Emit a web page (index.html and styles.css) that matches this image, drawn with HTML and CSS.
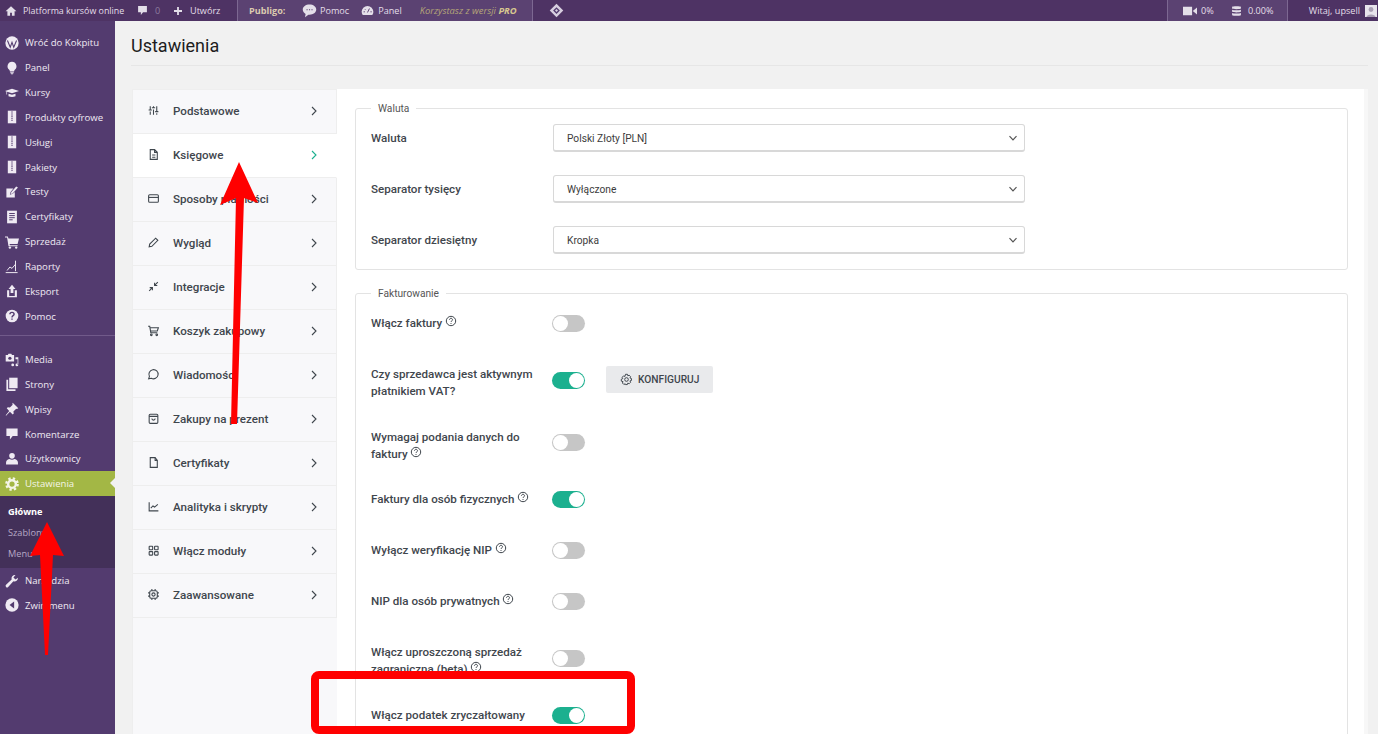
FILE: index.html
```html
<!DOCTYPE html>
<html>
<head>
    <title>Ustawienia</title>
    <link rel="stylesheet" href="styles.css">
</head>
<body>
    <svg class="sprites" width="0" height="0">
        <symbol id="chev" viewBox="0 0 10 10"><path d="M3 1l4 4-4 4" fill="none" stroke="currentColor" stroke-width="1.1"/></symbol>
        <symbol id="down" viewBox="0 0 10 10"><path d="M1.5 3.2L5 6.8l3.5-3.6" fill="none" stroke="currentColor" stroke-width="1.2"/></symbol>
        <symbol id="help" viewBox="0 0 12 12"><circle cx="6" cy="6" r="4.7" fill="none" stroke="currentColor"/><path d="M4.5 4.8c0-2 3-2 3 0 0 1.1-1.5 1.1-1.5 2.2M6 8v.9" fill="none" stroke="currentColor"/></symbol>
        <symbol id="zip" viewBox="0 0 20 20"><path d="M4 1h12v18H4z" fill="currentColor"/><path d="M10 2v14" stroke="#533b6f" stroke-width="2" stroke-dasharray="1.5 1.5"/></symbol>
    </svg>

    <div class="topbar">
        <div class="top-group top-site">
            <svg class="ti" viewBox="0 0 20 20"><path d="M10 2L1 10.500h3V18h4.500v-5h3v5H16v-7.500h3z"/></svg>
            <span class="site-name">Platforma kursów online</span>
            <svg class="ti ti-comment" viewBox="0 0 20 20"><path d="M2 2h16v11h-7l-4 5v-5H2z"/></svg>
            <span class="dim">0</span>
            <svg class="ti ti-plus" viewBox="0 0 20 20"><path d="M8.200 2h3.600v6.200H18v3.600h-6.200V18H8.200v-6.200H2V8.200h6.200z"/></svg>
            <span>Utwórz</span>
        </div>
        <div class="top-group top-publigo">
            <strong class="tan">Publigo:</strong>
            <svg class="ti ti-bubble" viewBox="0 0 20 20"><path d="M10 2c5 0 9 2.800 9 6.800s-4 6.700-9 6.700H8.500L4 19l.8-4.500C2.500 13.300 1 11.300 1 8.800 1 4.800 5 2 10 2z"/><path d="M6 9h1.500M9.300 9h1.500M12.600 9h1.500" stroke="#5b4272" stroke-width="1.600"/></svg>
            <span>Pomoc</span>
            <svg class="ti ti-gauge" viewBox="0 0 20 20"><path d="M10 3a9 9 0 0 1 9 9c0 2-.7 3.600-1.700 5H2.700A8.800 8.800 0 0 1 1 12a9 9 0 0 1 9-9z"/><path d="M10 13l3-6M4 12h2M14.500 12h2M6 8l1 1" stroke="#5b4272" stroke-width="1.500"/></svg>
            <span>Panel</span>
            <em class="tan-dim">Korzystasz z wersji <b>PRO</b></em>
        </div>
        <div class="top-group top-diamond">
            <svg class="ti ti-diamond" viewBox="0 0 20 20"><path d="M10 1l9 9-9 9-9-9z"/><path d="M10 5.500l4.500 4.500-4.500 4.500L5.500 10z" fill="#533b6f"/><path d="M10 8l2 2-2 2-2-2z"/></svg>
        </div>
        <div class="top-spacer"></div>
        <div class="top-group top-stats">
            <svg class="ti ti-video" viewBox="0 0 20 20"><path d="M0 4h13v12H0zM14 10l6-5v10z"/></svg>
            <span class="stat-video">0%</span>
            <svg class="ti ti-db" viewBox="0 0 20 20"><path d="M2 2.500C2 1 18 1 18 2.500v3C18 7 2 7 2 5.500zM2 7.500c3 1.500 13 1.500 16 0v4c-3 1.500-13 1.500-16 0zM2 13.500c3 1.500 13 1.500 16 0v4c-3 1.500-13 1.500-16 0z"/></svg>
            <span>0.00%</span>
        </div>
        <div class="top-user">
            <span>Witaj, upsell</span>
            <div class="avatar"><svg viewBox="0 0 12 12"><circle cx="6" cy="4.500" r="2.400" fill="#a99fb4"/><path d="M1.500 12c0-3.500 9-3.500 9 0z" fill="#a99fb4"/></svg></div>
        </div>
    </div>

    <div class="layout">
        <nav class="sidebar">
            <ul class="menu menu-first">
                <li><svg viewBox="0 0 20 20"><circle cx="10" cy="10" r="9.500"/><path d="M3.500 6.500L7.500 16 10 9l2.500 7 4-9.500" fill="none" stroke="#533b6f" stroke-width="1.500"/></svg>Wróć do Kokpitu</li>
                <li><svg viewBox="0 0 20 20"><path d="M10 1a6.500 6.500 0 0 1 4 11.500c-.6.700-1 1.500-1 2.500H7c0-1-.4-1.800-1-2.500A6.500 6.500 0 0 1 10 1zM7.500 16h5v1.500h-5zM8.500 18h3v1h-3z"/></svg>Panel</li>
                <li><svg viewBox="0 0 20 20"><path d="M0 7l10-3 10 3-10 3.500-7-2.300V12H2V7.800zM5 11l5 1.500 5-1.500v3.500c-3 1.500-7 1.500-10 0z"/></svg>Kursy</li>
                <li><svg><use href="#zip"/></svg>Produkty cyfrowe</li>
                <li><svg><use href="#zip"/></svg>Usługi</li>
                <li><svg><use href="#zip"/></svg>Pakiety</li>
                <li><svg viewBox="0 0 20 20"><path d="M2 5h10l-4 5-1 4 4-1.500L14 10v8H2z"/><path d="M9 10l7-8 2.500 1.500-7.500 8.500-3 1z"/></svg>Testy</li>
                <li><svg viewBox="0 0 20 20"><path d="M3 1h14v18H3z"/><path d="M6 5h8M6 8h8M6 11h8M6 14h5" stroke="#533b6f" stroke-width="1.400"/></svg>Certyfikaty</li>
                <li><svg viewBox="0 0 20 20"><path d="M0 2h4l1 3h15l-2 8H6.500L7 14.500h11V16H5L3 3.500H0z"/><circle cx="7" cy="18" r="1.700"/><circle cx="16" cy="18" r="1.700"/></svg>Sprzedaż</li>
                <li><svg viewBox="0 0 20 20"><path d="M1 18h17M3 15l4-5 3 2 5-6M15 1v15" fill="none" stroke="currentColor" stroke-width="1.400"/></svg>Raporty</li>
                <li><svg viewBox="0 0 20 20"><path d="M10 1l5 6h-3v6H8V7H5zM3 9h3v8h8V9h3v10H3z"/></svg>Eksport</li>
                <li><svg viewBox="0 0 20 20"><circle cx="10" cy="10" r="9"/><path d="M7 7.500c0-3.500 6-3.500 6 0 0 2-3 2-3 4.500M10 13.500v2" fill="none" stroke="#533b6f" stroke-width="2"/></svg>Pomoc</li>
            </ul>
            <div class="menu-sep"></div>
            <ul class="menu">
                <li><svg viewBox="0 0 20 20"><path d="M1 3h3l1-2h4l1 2h3v9H1z"/><circle cx="7" cy="7.500" r="2.300" fill="#533b6f"/><path d="M15 6h4v11h-1V9h-3zM9 17a2 2 0 1 0 4 0 2 2 0 1 0-4 0zM15 17a2 2 0 1 0 4 0 2 2 0 1 0-4 0z"/></svg>Media</li>
                <li><svg viewBox="0 0 20 20"><path d="M6 1h12v15H6z"/><path d="M2 4h2.500v13.500H15V20H2z"/></svg>Strony</li>
                <li><svg viewBox="0 0 20 20"><path d="M11 1l8 8-2 1-1-.5-4 4 .5 3-1.500 1.500-4-4-5.500 5.500L1 19l5-6-3.500-4L4 7.500l3 .5 4-4-.5-1z"/></svg>Wpisy</li>
                <li><svg viewBox="0 0 20 20"><path d="M2 2h16v11h-7l-4 5v-5H2z"/></svg>Komentarze</li>
                <li><svg viewBox="0 0 20 20"><circle cx="10" cy="5.500" r="4"/><path d="M1.500 18v-3c0-3 3-5 5-5 2 1.500 5 1.500 7 0 2 0 5 2 5 5v3z"/></svg>Użytkownicy</li>
                <li class="active"><svg viewBox="0 0 20 20"><circle cx="10" cy="10" r="5.500" fill="none" stroke="currentColor" stroke-width="3.500"/><circle cx="10" cy="10" r="8" fill="none" stroke="currentColor" stroke-width="3.500" stroke-dasharray="3.300 3"/></svg>Ustawienia<span class="active-tip"></span></li>
            </ul>
            <ul class="submenu">
                <li class="current">Główne</li>
                <li>Szablony</li>
                <li>Menu</li>
            </ul>
            <ul class="menu menu-tail">
                <li><svg viewBox="0 0 20 20"><path d="M18.500 5.500a5 5 0 0 1-6.500 5L4.500 18.500a2 2 0 0 1-3-3L9.500 8a5 5 0 0 1 5.500-6.500L12 5l3 3z"/></svg>Narzędzia</li>
                <li><svg viewBox="0 0 20 20"><circle cx="10" cy="10" r="9.500"/><path d="M13 5v10L6.500 10z" fill="#533b6f"/></svg>Zwiń menu</li>
            </ul>
        </nav>

        <main class="content">
            <h1 class="page-title">Ustawienia</h1>
            <div class="settings">
                <ul class="tabs">
                    <li><svg class="tab-icon" viewBox="0 0 24 24"><path d="M6 4v6M6 14v6M12 4v2M12 10v10M18 4v9M18 17v3M3 11h6M9 7h6M15 14h6"/></svg>Podstawowe<svg class="chev"><use href="#chev"/></svg></li>
                    <li class="tab-active"><svg class="tab-icon" viewBox="0 0 24 24"><path d="M6 3h8l5 5v13H6zM14 3v5h5M9.500 13h6M9.500 17h6"/></svg>Księgowe<svg class="chev"><use href="#chev"/></svg></li>
                    <li><svg class="tab-icon" viewBox="0 0 24 24"><rect x="3" y="5" width="18" height="14" rx="2"/><path d="M3 10h18"/></svg>Sposoby płatności<svg class="chev"><use href="#chev"/></svg></li>
                    <li><svg class="tab-icon" viewBox="0 0 24 24"><path d="M4 20l1-5L16 4l4 4L9 19z"/></svg>Wygląd<svg class="chev"><use href="#chev"/></svg></li>
                    <li><svg class="tab-icon" viewBox="0 0 24 24"><path d="M4 20l6-6M10 19v-5H5M20 4l-6 6M14 5v5h5"/></svg>Integracje<svg class="chev"><use href="#chev"/></svg></li>
                    <li><svg class="tab-icon" viewBox="0 0 24 24"><circle cx="8" cy="20" r="1.500"/><circle cx="18" cy="20" r="1.500"/><path d="M2 4h3l2 12h12M6 7h15l-2 6H7"/></svg>Koszyk zakupowy<svg class="chev"><use href="#chev"/></svg></li>
                    <li><svg class="tab-icon" viewBox="0 0 24 24"><path d="M3 20l1.500-4.500A8.500 8.500 0 1 1 8 19z"/></svg>Wiadomości<svg class="chev"><use href="#chev"/></svg></li>
                    <li><svg class="tab-icon" viewBox="0 0 24 24"><rect x="4" y="4" width="16" height="17" rx="2"/><path d="M4 8h16M9 12c0 4 6 4 6 0"/></svg>Zakupy na prezent<svg class="chev"><use href="#chev"/></svg></li>
                    <li><svg class="tab-icon" viewBox="0 0 24 24"><path d="M6 3h9l4 5v13H6z"/><path d="M15 3v5h4"/></svg>Certyfikaty<svg class="chev"><use href="#chev"/></svg></li>
                    <li><svg class="tab-icon" viewBox="0 0 24 24"><path d="M4 4v16h17M7 15l4-4 3 2 6-5"/></svg>Analityka i skrypty<svg class="chev"><use href="#chev"/></svg></li>
                    <li><svg class="tab-icon" viewBox="0 0 24 24"><rect x="4" y="4" width="6.500" height="6.500" rx="1"/><rect x="14" y="4" width="6.500" height="6.500" rx="1"/><rect x="4" y="14" width="6.500" height="6.500" rx="1"/><rect x="14" y="14" width="6.500" height="6.500" rx="1"/></svg>Włącz moduły<svg class="chev"><use href="#chev"/></svg></li>
                    <li><svg class="tab-icon" viewBox="0 0 24 24"><rect x="5" y="5" width="14" height="14" rx="3"/><circle cx="12" cy="12" r="3"/><path d="M2 9h3M2 15h3M19 9h3M19 15h3M9 2v3M15 2v3M9 19v3M15 19v3"/></svg>Zaawansowane<svg class="chev"><use href="#chev"/></svg></li>
                </ul>

                <div class="panel">
                    <fieldset class="box box-currency">
                        <legend>Waluta</legend>
                        <div class="field">
                            <label>Waluta</label>
                            <div class="select">Polski Złoty [PLN]<svg><use href="#down"/></svg></div>
                        </div>
                        <div class="field">
                            <label>Separator tysięcy</label>
                            <div class="select">Wyłączone<svg><use href="#down"/></svg></div>
                        </div>
                        <div class="field">
                            <label>Separator dziesiętny</label>
                            <div class="select">Kropka<svg><use href="#down"/></svg></div>
                        </div>
                    </fieldset>

                    <fieldset class="box box-invoice">
                        <legend>Fakturowanie</legend>
                        <div class="opt">
                            <div class="opt-label">Włącz faktury <svg class="help"><use href="#help"/></svg></div>
                            <span class="toggle"></span>
                        </div>
                        <div class="opt opt-tall">
                            <div class="opt-label">Czy sprzedawca jest aktywnym płatnikiem VAT?</div>
                            <span class="toggle on"></span>
                            <button class="config"><svg viewBox="0 0 20 20"><circle cx="10" cy="10" r="2.800"/><path d="M8.500 2h3l.5 2.300 2-.9 2.300 2.200-1 2 2.300.9v3l-2.300.7 1 2.100-2.200 2.200-2.100-1-.7 2.300h-3L8 16.600l-2.100 1-2.200-2.200 1-2.100L2 12.500v-3l2.300-.9-1-2 2.200-2.200 2.100.9z"/></svg>KONFIGURUJ</button>
                        </div>
                        <div class="opt opt-tall">
                            <div class="opt-label">Wymagaj podania danych do faktury <svg class="help"><use href="#help"/></svg></div>
                            <span class="toggle"></span>
                        </div>
                        <div class="opt">
                            <div class="opt-label">Faktury dla osób fizycznych <svg class="help"><use href="#help"/></svg></div>
                            <span class="toggle on"></span>
                        </div>
                        <div class="opt">
                            <div class="opt-label">Wyłącz weryfikację NIP <svg class="help"><use href="#help"/></svg></div>
                            <span class="toggle"></span>
                        </div>
                        <div class="opt">
                            <div class="opt-label">NIP dla osób prywatnych <svg class="help"><use href="#help"/></svg></div>
                            <span class="toggle"></span>
                        </div>
                        <div class="opt opt-tall">
                            <div class="opt-label">Włącz uproszczoną sprzedaż zagraniczną (beta) <svg class="help"><use href="#help"/></svg></div>
                            <span class="toggle"></span>
                        </div>
                        <div class="opt">
                            <div class="opt-label">Włącz podatek zryczałtowany</div>
                            <span class="toggle on"></span>
                        </div>
                    </fieldset>
                </div>
            </div>
        </main>
    </div>

    <!-- red marks drawn on top of the screenshot -->
    <svg class="marks" width="1378" height="734" viewBox="0 0 1378 734">
        <path d="M239 162L258 203 244 198 237 424 231 424 236 198 220 205z" fill="#f00"/>
        <path d="M47 522L64 556 53 555 48 655 45 655 40 555 30 556z" fill="#f00"/>
        <rect x="315" y="675" width="316" height="55" rx="4" fill="none" stroke="#f00" stroke-width="8"/>
    </svg>
</body>
</html>
```

FILE: styles.css
```css
* {
    box-sizing: border-box;
}
html, body {
    margin: 0;
    height: 734px;
    overflow: hidden;
}
body {
    font-family: "Open Sans", sans-serif;
    background-color: #f1f1f1;
    color: #444;
}
ul {
    list-style: none;
    margin: 0;
    padding: 0;
}
.sprites {
    display: block;
    height: 0;
}
.marks {
    position: absolute;
    top: 0;
    left: 0;
    pointer-events: none;
}

/* top bar */
.topbar {
    display: flex;
    height: 21px;
    background-color: #4e3364;
    color: #e4dfe9;
    font-size: 9.100px;
    white-space: nowrap;
}
.top-group {
    display: flex;
    align-items: center;
    height: 21px;
}
.ti {
    width: 12px;
    height: 12px;
    fill: currentColor;
    flex: none;
}
.top-site {
    width: 237px;
    padding-left: 5px;
}
.site-name {
    margin-left: 6px;
    width: 114px;
    font-size: 8.900px;
}
.ti-comment {
    width: 11px;
    height: 11px;
    margin-right: 7px;
}
.ti-plus {
    width: 10px;
    height: 10px;
    margin-left: 14px;
    margin-right: 7px;
}
.dim {
    color: #8d7b9e;
    width: 4px;
}
.top-publigo {
    width: 296px;
    padding-left: 11px;
    background-color: #5b4272;
    border-left: 1px solid #7d6892;
    border-right: 1px solid #7d6892;
}
.tan {
    color: #dccbb0;
    font-weight: 700;
    width: 38px;
}
.tan-dim {
    color: #b5a678;
    font-size: 9.400px;
    margin-left: 18px;
}
.tan-dim b {
    color: #d8c890;
}
.ti-bubble {
    width: 15px;
    height: 15px;
    margin-left: 15px;
    margin-right: 3px;
}
.ti-gauge {
    width: 13px;
    height: 13px;
    margin-left: 12px;
    margin-right: 4px;
}
.top-diamond {
    padding-left: 16px;
}
.ti-diamond {
    width: 15px;
    height: 15px;
    color: #d8cfe0;
}
.top-spacer {
    flex: 1;
}
.top-stats {
    width: 121px;
    padding-left: 15px;
    background-color: #5b4272;
    border-left: 1px solid #7d6892;
    border-right: 1px solid #7d6892;
}
.ti-video {
    width: 14px;
    height: 14px;
    margin-right: 4px;
}
.stat-video {
    width: 13px;
}
.ti-db {
    width: 11px;
    height: 12px;
    margin-left: 17px;
    margin-right: 6px;
}
.top-user {
    display: flex;
    align-items: center;
    justify-content: flex-end;
    width: 90px;
    gap: 5px;
    padding-right: 1px;
}
.avatar {
    width: 12px;
    height: 12px;
    background-color: #e8e4ec;
}
.avatar svg {
    display: block;
}

/* sidebar */
.layout {
    display: flex;
    height: 713px;
}
.sidebar {
    width: 115px;
    flex: none;
    background-color: #533b6f;
    color: #efeaf3;
    font-size: 9.600px;
}
.menu-first {
    padding-top: 9.500px;
}
.menu li {
    position: relative;
    display: flex;
    align-items: center;
    height: 24.850px;
    gap: 6px;
    padding-left: 5px;
}
.menu li svg {
    width: 14px;
    height: 14px;
    fill: currentColor;
    flex: none;
}
.menu-sep {
    height: 1px;
    margin: 6px 0 11.500px;
    background-color: #715a8a;
}
.menu li.active {
    background-color: #a3b745;
    color: #f4f5e6;
}
.active-tip {
    position: absolute;
    right: 0;
    top: 7px;
    border: 5px solid transparent;
    border-right-color: #f1f1f1;
    border-left-width: 0;
}
.submenu {
    height: 72px;
    padding-top: 4.500px;
    background-color: #433059;
    color: #b6a8c6;
    font-size: 9.200px;
}
.submenu li {
    height: 21px;
    line-height: 21px;
    padding-left: 8px;
}
.submenu .current {
    color: #fff;
    font-weight: 700;
}
.menu-tail {
    padding-top: 0;
}

/* content */
.content {
    flex: 1;
    min-width: 0;
    padding-left: 16px;
}
.page-title {
    margin: 0 10px 0 0;
    height: 45px;
    padding-top: 14px;
    font-family: Roboto, sans-serif;
    font-size: 18px;
    line-height: 22px;
    font-weight: 400;
    color: #1d1d1d;
    border-bottom: 1px solid #e6e6e6;
}
.settings {
    display: flex;
    margin-top: 23px;
    margin-left: 1px;
    margin-right: 10px;
    height: 645px;
    overflow: hidden;
    background-color: #fff;
    border-right: 4px solid #f7f7f7;
}
.tabs {
    width: 205px;
    flex: none;
    background-color: #f8f8fa;
    font-family: Roboto, sans-serif;
    font-weight: 500;
    font-size: 11.600px;
    color: #3f464d;
    border-left: 1px solid #eeeeee;
    border-top: 1px solid #eeeeee;
}
.tabs li {
    display: flex;
    align-items: center;
    height: 44px;
    padding-left: 14px;
    padding-right: 17px;
    padding-bottom: 2px;
    border-bottom: 1px solid #eeeeee;
    border-right: 1px solid #eeeeee;
}
.tabs .tab-active {
    background-color: #fff;
    border-right-color: #fff;
}
.tab-icon {
    width: 13px;
    height: 13px;
    margin-right: 13px;
    fill: none;
    stroke: currentColor;
    stroke-width: 2;
    flex: none;
}
.chev {
    width: 10px;
    height: 10px;
    margin-left: auto;
}
.tab-active .chev {
    color: #1cb08f;
}

/* right panel */
.panel {
    flex: 1;
    min-width: 0;
    padding: 13px 16px 0 18px;
    font-family: Roboto, sans-serif;
    color: #3f464d;
}
.box {
    margin: 0;
    border: 1px solid #e3e3e3;
    border-radius: 3px;
    min-width: 0;
    padding: 0 15px;
}
.box legend {
    margin-left: 0;
    padding: 0 7px;
    font-family: Roboto, sans-serif;
    font-size: 10.200px;
    line-height: 13px;
    color: #555;
}
.box-currency {
    height: 168px;
    margin-bottom: 17px;
    padding-top: 9px;
}
.box-invoice {
    padding-top: 15px;
    height: 500px;
}
.field {
    display: flex;
    align-items: center;
    height: 28px;
    margin-bottom: 23px;
}
.field label {
    width: 182px;
    font-weight: 500;
    font-size: 11.600px;
}
.select {
    display: flex;
    align-items: center;
    justify-content: space-between;
    width: 472px;
    height: 28px;
    padding: 1px 6px 0 13px;
    border: 1px solid #d8d8d8;
    border-bottom-width: 2px;
    border-radius: 3px;
    font-size: 10.200px;
    color: #3c3c3c;
}
.select svg {
    width: 10px;
    height: 10px;
    color: #555;
}
.opt {
    display: flex;
    align-items: flex-start;
    height: 51px;
}
.opt-tall {
    height: 62.500px;
}
.opt-label {
    width: 181px;
    padding-right: 10px;
    font-weight: 500;
    font-size: 11.600px;
    line-height: 17px;
}
.help {
    display: inline-block;
    width: 12px;
    height: 12px;
    vertical-align: 0;
}
.toggle {
    position: relative;
    width: 33px;
    height: 17px;
    border-radius: 9px;
    background-color: #c6c6c6;
    flex: none;
}
.toggle::after {
    content: "";
    position: absolute;
    top: 1px;
    left: 1px;
    width: 15px;
    height: 15px;
    border-radius: 50%;
    background-color: #fff;
}
.toggle.on {
    background-color: #1cb08f;
}
.toggle.on::after {
    left: 17px;
}
.opt-tall .toggle {
    margin-top: 5.500px;
}
.config {
    display: flex;
    align-items: center;
    gap: 5px;
    width: 107px;
    height: 27px;
    margin: 0 0 0 21px;
    padding: 0 0 0 14px;
    border: none;
    border-radius: 2px;
    background-color: #e9eaec;
    font-family: Roboto, sans-serif;
    font-weight: 500;
    font-size: 10.200px;
    color: #3f464d;
}
.config svg {
    width: 13px;
    height: 13px;
    fill: none;
    stroke: currentColor;
    stroke-width: 1.500;
}
```
